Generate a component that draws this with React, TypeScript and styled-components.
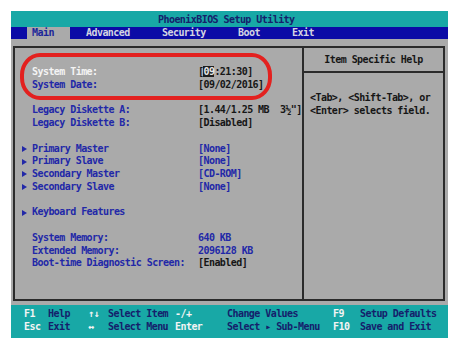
import React from "react";
import styled, { createGlobalStyle } from "styled-components";

const GlobalStyle = createGlobalStyle`
	body {
		margin: 0;
		background: #ffffff;
	}
`;

const ROW = 12.75;

const Screen = styled.div`
	position: relative;
	margin: 11px 0 0 11px;
	width: 437px;
	height: 327px;
	display: flex;
	flex-direction: column;
	font-family: "DejaVu Sans Mono", "Liberation Mono", monospace;
	font-weight: bold;
	font-size: 10px;
	letter-spacing: -0.56px;
	box-shadow: 0 1px 0 #1c1c1c;
`;

const TitleBar = styled.div`
	height: 16px;
	background: #18a8a6;
	color: #15206b;
	display: flex;
	align-items: center;
	padding-left: 147px;
	white-space: pre;
`;

const MenuBar = styled.div`
	height: 12px;
	background: #0b0ba6;
	display: flex;
	padding-left: 16px;
`;

interface IMenuItem {
	$w?: number;
	$ml?: number;
	$active?: boolean;
}

const MenuItem = styled.div<IMenuItem>`
	width: ${(p) => (p.$w ? `${p.$w}px` : "auto")};
	margin-left: ${(p) => p.$ml || 0}px;
	padding-left: 5px;
	line-height: 12px;
	background: ${(p) => (p.$active ? "#aaaaaa" : "transparent")};
	color: ${(p) => (p.$active ? "#1c2699" : "#d4d4e2")};
`;

const Body = styled.div`
	flex: 1;
	background: #aaaaaa;
	padding: 7px 3px 4px 2px;
	display: flex;
`;

const Frame = styled.div`
	flex: 1;
	border: 2px solid #2b2b2b;
	display: flex;
`;

const LeftPanel = styled.div`
	width: 287px;
	border-right: 2px solid #2b2b2b;
	padding-top: 18px;
`;

const RightPanel = styled.div`
	flex: 1;
	display: flex;
	flex-direction: column;
`;

const Row = styled.div`
	display: flex;
	align-items: center;
	height: ${ROW}px;
	line-height: ${ROW}px;
	padding-left: 7px;
	white-space: pre;
`;

const Spacer = styled.div`
	height: ${ROW}px;
`;

const ArrowSlot = styled.span`
	width: 10px;
	display: flex;
	align-items: center;
`;

const Triangle = styled.span`
	width: 0;
	height: 0;
	border-left: 5px solid #2228a8;
	border-top: 3px solid transparent;
	border-bottom: 3px solid transparent;
`;

type Tone = "blue" | "black" | "white";

const tones: Record<Tone, string> = {
	blue: "#2228a8",
	black: "#161616",
	white: "#f4f4f4",
};

const Label = styled.span<{ $tone: Tone }>`
	width: 166px;
	color: ${(p) => tones[p.$tone]};
`;

const Value = styled.span<{ $tone: Tone }>`
	color: ${(p) => tones[p.$tone]};
`;

const Cursor = styled.span`
	background: #1e1e1e;
	color: #e8e8e8;
`;

const HelpHeader = styled.div`
	height: 23px;
	border-bottom: 2px solid #2b2b2b;
	display: flex;
	align-items: center;
	justify-content: center;
	color: #161616;
`;

const HelpBody = styled.div`
	padding: 19px 0 0 6px;
	color: #161616;
`;

const HelpLine = styled.div`
	height: ${ROW}px;
	line-height: ${ROW}px;
	white-space: pre;
`;

const Footer = styled.div`
	height: 30px;
	background: #18a8a6;
	padding: 3px 0 0 13px;
	display: grid;
	grid-template-columns: 24px 40px 20px 67px 52px 106px 27px auto;
	grid-auto-rows: 12.5px;
	line-height: 12.5px;
	white-space: pre;
`;

const Key = styled.span`
	color: #f4f4f4;
`;

const Desc = styled.span`
	color: #15206b;
`;

const Ring = styled.div`
	position: absolute;
	left: 9px;
	top: 42px;
	width: 252px;
	height: 47px;
	box-sizing: border-box;
	border: 4px solid #e3211f;
	border-radius: 20px / 22px;
	pointer-events: none;
`;

type Item =
	| null
	| { label: string; value: React.ReactNode; labelTone: Tone; valueTone: Tone; sub?: boolean };

const items: Item[] = [
	{
		label: "System Time:",
		labelTone: "white",
		valueTone: "black",
		value: (
			<>
				[<Cursor>09</Cursor>:21:30]
			</>
		),
	},
	{ label: "System Date:", labelTone: "blue", valueTone: "black", value: "[09/02/2016]" },
	null,
	{ label: "Legacy Diskette A:", labelTone: "blue", valueTone: "black", value: '[1.44/1.25 MB  3½"]' },
	{ label: "Legacy Diskette B:", labelTone: "blue", valueTone: "black", value: "[Disabled]" },
	null,
	{ label: "Primary Master", labelTone: "blue", valueTone: "blue", value: "[None]", sub: true },
	{ label: "Primary Slave", labelTone: "blue", valueTone: "blue", value: "[None]", sub: true },
	{ label: "Secondary Master", labelTone: "blue", valueTone: "blue", value: "[CD-ROM]", sub: true },
	{ label: "Secondary Slave", labelTone: "blue", valueTone: "blue", value: "[None]", sub: true },
	null,
	{ label: "Keyboard Features", labelTone: "blue", valueTone: "blue", value: "", sub: true },
	null,
	{ label: "System Memory:", labelTone: "blue", valueTone: "blue", value: "640 KB" },
	{ label: "Extended Memory:", labelTone: "blue", valueTone: "blue", value: "2096128 KB" },
	{ label: "Boot-time Diagnostic Screen:", labelTone: "blue", valueTone: "black", value: "[Enabled]" },
];

const footer: [string, string, string, string, string, string, string, string][] = [
	["F1", "Help", "↑↓", "Select Item", "-/+", "Change Values", "F9", "Setup Defaults"],
	["Esc", "Exit", "↔", "Select Menu", "Enter", "Select ▸ Sub-Menu", "F10", "Save and Exit"],
];

export const App = () => {
	return (
		<>
			<GlobalStyle />
			<Screen>
				<TitleBar>PhoenixBIOS Setup Utility</TitleBar>
				<MenuBar>
					<MenuItem $w={38} $active>
						Main
					</MenuItem>
					<MenuItem $w={71} $ml={11}>
						Advanced
					</MenuItem>
					<MenuItem $w={71}>Security</MenuItem>
					<MenuItem $w={49}>Boot</MenuItem>
					<MenuItem>Exit</MenuItem>
				</MenuBar>
				<Body>
					<Frame>
						<LeftPanel>
							{items.map((it, i) =>
								it ? (
									<Row key={i}>
										<ArrowSlot>{it.sub && <Triangle />}</ArrowSlot>
										<Label $tone={it.labelTone}>{it.label}</Label>
										<Value $tone={it.valueTone}>{it.value}</Value>
									</Row>
								) : (
									<Spacer key={i} />
								)
							)}
						</LeftPanel>
						<RightPanel>
							<HelpHeader>Item Specific Help</HelpHeader>
							<HelpBody>
								<HelpLine>{"<Tab>, <Shift-Tab>, or"}</HelpLine>
								<HelpLine>{"<Enter> selects field."}</HelpLine>
							</HelpBody>
						</RightPanel>
					</Frame>
				</Body>
				<Footer>
					{footer.map((row) =>
						row.map((cell, j) =>
							j % 2 === 0 ? <Key key={row[0] + j}>{cell}</Key> : <Desc key={row[0] + j}>{cell}</Desc>
						)
					)}
				</Footer>
				<Ring />
			</Screen>
		</>
	);
};

export default App;
